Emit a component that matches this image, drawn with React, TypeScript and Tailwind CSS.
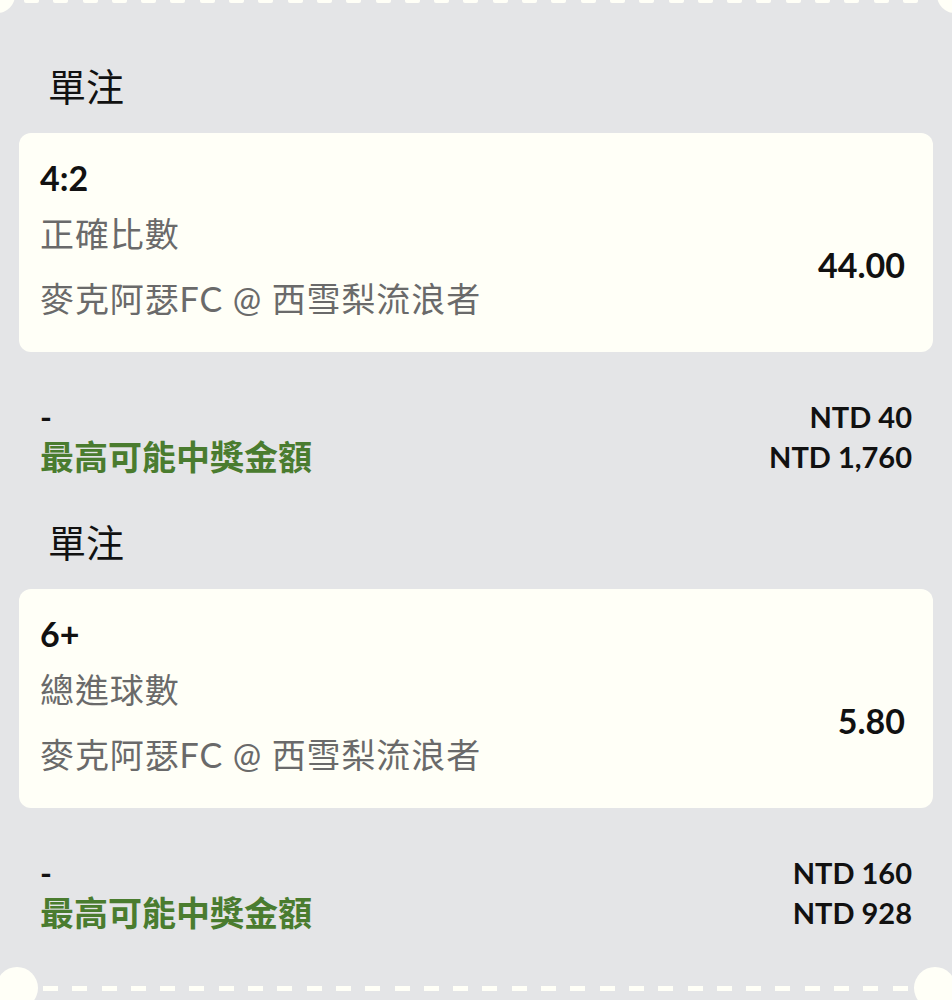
import React from 'react';

type Bet = {
  pick: string;
  market: string;
  match: string;
  odds: string;
  stake: string;
  payout: string;
};

const bets: Bet[] = [
  { pick: '4:2', market: '正確比數', match: '麥克阿瑟FC @ 西雪梨流浪者', odds: '44.00', stake: 'NTD 40', payout: 'NTD 1,760' },
  { pick: '6+', market: '總進球數', match: '麥克阿瑟FC @ 西雪梨流浪者', odds: '5.80', stake: 'NTD 160', payout: 'NTD 928' },
];

// ticket edge: notches on both sides + dashed line
const TicketEdge = ({ top }: { top?: boolean }) => {
  if (top) {
    return (
      <div className="absolute left-0 right-0 top-0 h-[14px] pointer-events-none">
        <div className="absolute -left-[21px] -top-[23px] h-[36px] w-[36px] rounded-full bg-[#fffff7]" />
        <div className="absolute -right-[21px] -top-[23px] h-[36px] w-[36px] rounded-full bg-[#fffff7]" />
        <div className="absolute left-[24px] -top-[2px] flex gap-[14.3px]">
          {Array.from({ length: 31 }).map((_, i) => (
            <div key={i} className="h-[5px] w-[15px] rounded-b-[2px] bg-[#fffff7]" />
          ))}
        </div>
      </div>
    );
  }
  return (
    <div className="absolute left-0 right-0 top-[967px] h-[42px] pointer-events-none">
      <div className="absolute -left-[4px] top-0 h-[42px] w-[42px] rounded-full bg-[#fffff7]" />
      <div className="absolute left-[914px] top-0 h-[42px] w-[42px] rounded-full bg-[#fffff7]" />
      <div className="absolute left-[43px] top-[19px] flex gap-[14.3px]">
        {Array.from({ length: 30 }).map((_, i) => (
          <div key={i} className="h-[5px] w-[15px] bg-[#fffff7]" />
        ))}
      </div>
    </div>
  );
};

const BetSection = ({ bet, first }: { bet: Bet; first: boolean }) => (
  <div className={first ? 'pt-[60px]' : 'pt-[39px]'}>
    <div className="pl-[48px] text-[38px] leading-[52px] text-[#111]">單注</div>

    <div className="mx-[19px] mt-[21px] rounded-[12px] bg-[#fffff7] pl-[21px] pr-[28px] pt-[22px] pb-[21px]">
      <div className="text-[34px] font-bold leading-[46px] text-[#111]">{bet.pick}</div>
      <div className="flex items-center justify-between">
        <div className="text-[34px] leading-[65px] tracking-[0.9px] text-[#6a6a6a]">
          <div>{bet.market}</div>
          <div>{bet.match}</div>
        </div>
        <div className="pb-[4px] text-[34px] font-bold text-[#111]">{bet.odds}</div>
      </div>
    </div>

    <div className="mt-[45px] px-[40px]">
      <div className="flex items-center justify-between leading-[40px]">
        <span className="text-[32px] font-bold text-[#111]">-</span>
        <span className="text-[29px] font-bold text-[#111]">{bet.stake}</span>
      </div>
      <div className="flex items-center justify-between leading-[40px]">
        <span className="text-[34px] font-bold text-[#4a7c2f]">最高可能中獎金額</span>
        <span className="text-[29px] font-bold text-[#111]">{bet.payout}</span>
      </div>
    </div>
  </div>
);

export default function App() {
  return (
    <div className="relative h-[1000px] w-full overflow-hidden bg-[#e4e5e7] font-[Lato,'Noto_Sans_CJK_TC',sans-serif]">
      <TicketEdge top />
      {bets.map((b, i) => (
        <BetSection key={i} bet={b} first={i === 0} />
      ))}
      <TicketEdge />
    </div>
  );
}
